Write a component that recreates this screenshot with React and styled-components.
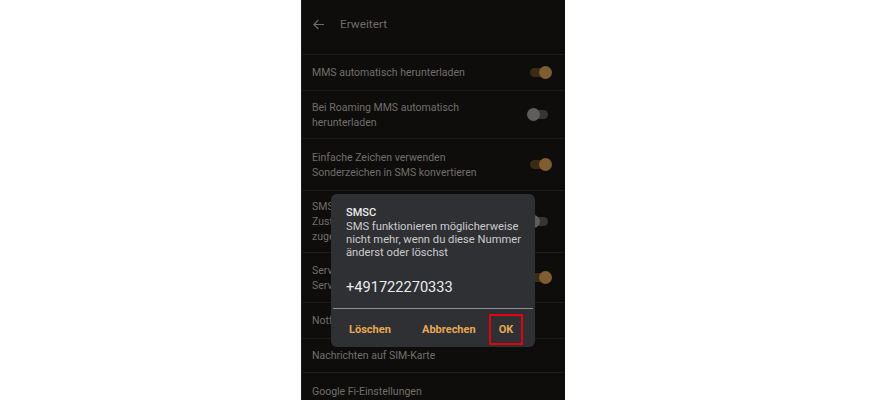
import React from 'react'
import styled, { createGlobalStyle } from 'styled-components'

const Global = createGlobalStyle`
  html, body {
    margin: 0;
    padding: 0;
    background: #ffffff;
  }
  body {
    font-family: Roboto, "Noto Sans", "Liberation Sans", sans-serif;
  }
`

const Page = styled.div`
  width: 879px;
  height: 400px;
  display: flex;
  overflow: hidden;
`

const Phone = styled.div`
  position: relative;
  margin-left: 301px;
  width: 263px;
  height: 400px;
  background: #0e0d0c;
  border-left: 1px solid #1e1d1c;
  display: flex;
  flex-direction: column;
  overflow: hidden;
`

const Header = styled.div`
  height: 55px;
  box-sizing: border-box;
  padding: 15px 0 0 10px;
  display: flex;
  align-items: flex-start;
  gap: 15px;
  border-bottom: 1px solid #1b1a19;
  flex-shrink: 0;
`

const BackArrow = styled.svg`
  width: 13px;
  height: 13px;
  margin-top: 3px;
`

const Title = styled.div`
  font-size: 11.8px;
  color: #6e6c69;
  line-height: 18px;
`

const Row = styled.div`
  height: ${p => p.h}px;
  box-sizing: border-box;
  padding: 0 12px 0 10px;
  display: flex;
  align-items: center;
  justify-content: space-between;
  border-bottom: 1px solid #1b1a19;
  flex-shrink: 0;
`

const Texts = styled.div`
  display: flex;
  flex-direction: column;
  font-size: 10.5px;
  line-height: 15px;
  color: #716e6a;
  max-width: 200px;
`

const Toggle = styled.div`
  position: relative;
  width: 18px;
  height: 9px;
  border-radius: 5px;
  background: ${p => (p.on ? '#3b2a14' : '#363534')};
  margin-right: 5px;
  flex-shrink: 0;

  &::after {
    content: '';
    position: absolute;
    top: -2px;
    ${p => (p.on ? 'right: -4px;' : 'left: -3px;')}
    width: 13px;
    height: 13px;
    border-radius: 50%;
    background: ${p => (p.on ? '#7d5d31' : '#5f5e5d')};
  }
`

const Dialog = styled.div`
  position: absolute;
  left: 29px;
  top: 194px;
  width: 204px;
  height: 153px;
  box-sizing: border-box;
  background: #2f3033;
  border-radius: 6px;
  padding: 12px 0 0 0;
  display: flex;
  flex-direction: column;
`

const DialogTitle = styled.div`
  padding-left: 15px;
  font-size: 11px;
  font-weight: 500;
  color: #ebebeb;
  line-height: 14px;
`

const DialogBody = styled.div`
  padding-left: 15px;
  font-size: 11.2px;
  color: #cbcbcb;
  line-height: 13px;
`

const Number = styled.div`
  margin-top: 18px;
  padding-left: 15px;
  font-size: 14.6px;
  color: #ececec;
  line-height: 20px;
`

const Underline = styled.div`
  margin: 11px 2px 0 2px;
  height: 1px;
  background: #8f8f8f;
`

const Actions = styled.div`
  display: flex;
  align-items: center;
  padding: 5px 0 0 16px;
`

const Action = styled.button`
  background: none;
  border: ${p => (p.marked ? '2px solid #e3000f' : '2px solid transparent')};
  padding: 0;
  font-family: inherit;
  font-size: 11px;
  font-weight: 700;
  color: #e5a951;
  height: 31px;
  width: ${p => p.w}px;
  margin-left: ${p => p.ml}px;
  display: flex;
  align-items: center;
  justify-content: ${p => (p.marked ? 'center' : 'flex-start')};
`

const rows = [
  { h: 36, lines: ['MMS automatisch herunterladen'], toggle: 'on' },
  { h: 48, lines: ['Bei Roaming MMS automatisch', 'herunterladen'], toggle: 'off' },
  { h: 52, lines: ['Einfache Zeichen verwenden', 'Sonderzeichen in SMS konvertieren'], toggle: 'on' },
  { h: 62, lines: ['SMS-Zustellberichte', 'Zustellberichte für alle', 'zugestellten SMS anfordern'], toggle: 'off' },
  { h: 50, lines: ['Service-Nachrichten', 'Service-Nachrichten empfangen'], toggle: 'on' },
  { h: 36, lines: ['Notfallbenachrichtigungen'] },
  { h: 34, lines: ['Nachrichten auf SIM-Karte'] },
  { h: 37, lines: ['Google Fi-Einstellungen'] },
]

export default function App() {
  return (
    <>
      <Global />
      <Page>
        <Phone>
          <Header>
            <BackArrow viewBox="0 0 24 24" fill="none" stroke="#6e6c69" strokeWidth="2.2" strokeLinecap="square">
              <path d="M21 12H4M11 4.5L3.5 12 11 19.5" />
            </BackArrow>
            <Title>Erweitert</Title>
          </Header>
          {rows.map((r, i) => (
            <Row key={i} h={r.h}>
              <Texts>
                {r.lines.map((l, j) => (
                  <span key={j}>{l}</span>
                ))}
              </Texts>
              {r.toggle && <Toggle on={r.toggle === 'on' ? 1 : 0} />}
            </Row>
          ))}
          <Dialog>
            <DialogTitle>SMSC</DialogTitle>
            <DialogBody>
              SMS funktionieren möglicherweise<br />
              nicht mehr, wenn du diese Nummer<br />
              änderst oder löschst
            </DialogBody>
            <Number>+491722270333</Number>
            <Underline />
            <Actions>
              <Action w={60} ml={0}>Löschen</Action>
              <Action w={69} ml={13}>Abbrechen</Action>
              <Action w={34} ml={0} marked={1}>OK</Action>
            </Actions>
          </Dialog>
        </Phone>
      </Page>
    </>
  )
}
